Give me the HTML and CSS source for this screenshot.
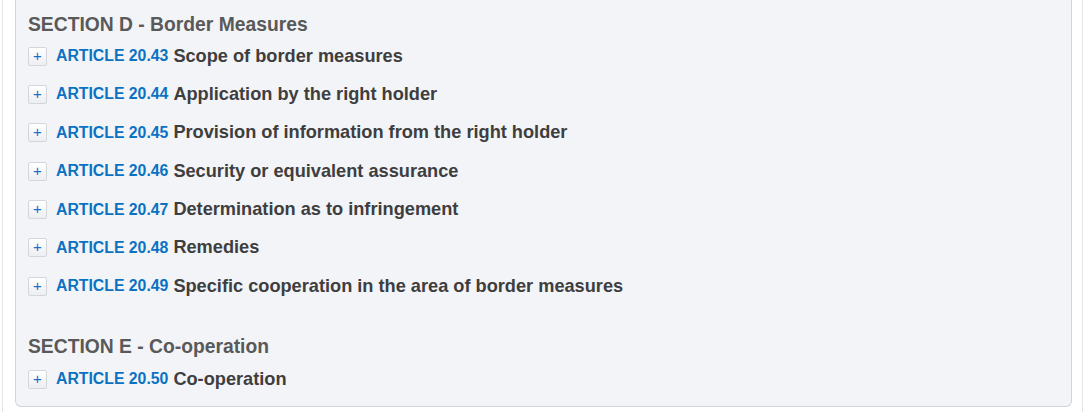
FILE: index.html
```html
<!DOCTYPE html>
<html>
<head>
<meta charset="utf-8">
<link rel="stylesheet" href="styles.css">
</head>
<body>
<div class="page">
  <div class="panel">
    <h2 class="section">SECTION D - Border Measures</h2>
    <ul class="articles">
      <li class="row"><span class="toggle">+</span><span class="num">ARTICLE 20.43</span><span class="title">Scope of border measures</span></li>
      <li class="row"><span class="toggle">+</span><span class="num">ARTICLE 20.44</span><span class="title">Application by the right holder</span></li>
      <li class="row"><span class="toggle">+</span><span class="num">ARTICLE 20.45</span><span class="title">Provision of information from the right holder</span></li>
      <li class="row"><span class="toggle">+</span><span class="num">ARTICLE 20.46</span><span class="title">Security or equivalent assurance</span></li>
      <li class="row"><span class="toggle">+</span><span class="num">ARTICLE 20.47</span><span class="title">Determination as to infringement</span></li>
      <li class="row"><span class="toggle">+</span><span class="num">ARTICLE 20.48</span><span class="title">Remedies</span></li>
      <li class="row"><span class="toggle">+</span><span class="num">ARTICLE 20.49</span><span class="title">Specific cooperation in the area of border measures</span></li>
    </ul>
    <h2 class="section section-e">SECTION E - Co-operation</h2>
    <ul class="articles">
      <li class="row"><span class="toggle">+</span><span class="num">ARTICLE 20.50</span><span class="title">Co-operation</span></li>
    </ul>
  </div>
</div>
</body>
</html>
```
FILE: styles.css
```css
html, body {
  margin: 0;
  padding: 0;
  background: #ffffff;
}
body {
  font-family: "Liberation Sans", Arial, sans-serif;
}
.page {
  margin: 0 2px;
  border-left: 1px solid #e2e4e8;
  border-right: 1px solid #e2e4e8;
  padding: 0 10px 6px 12px;
  height: 412px;
  box-sizing: border-box;
}
.panel {
  background: #f3f4f8;
  border: 1px solid #cfd4dd;
  border-top: 0;
  border-radius: 0 0 6px 6px;
  padding: 13px 12px 17px 12px;
}
.section {
  margin: 0;
  font-size: 19.3px;
  line-height: 24px;
  font-weight: bold;
  color: #595959;
}
.section-e {
  margin-top: 39px;
}
.articles {
  list-style: none;
  margin: 9px 0 0 0;
  padding: 0;
}
.section-e + .articles {
  margin-top: 10px;
}
.row {
  display: flex;
  align-items: center;
  height: 20px;
  margin-bottom: 18.4px;
  white-space: nowrap;
}
.row:last-child {
  margin-bottom: 0;
}
.toggle {
  box-sizing: border-box;
  width: 19px;
  height: 19px;
  border: 1px solid #d3d7dd;
  border-radius: 2px;
  background: linear-gradient(#ffffff, #eceef1);
  color: #1a6fc8;
  font-size: 15px;
  font-weight: normal;
  line-height: 16px;
  text-align: center;
  margin-right: 9px;
  flex: none;
}
.num {
  font-size: 15.8px;
  font-weight: bold;
  color: #0b72c2;
  margin-right: 5px;
}
.title {
  font-size: 18.2px;
  font-weight: bold;
  color: #3e3e3e;
}
```
